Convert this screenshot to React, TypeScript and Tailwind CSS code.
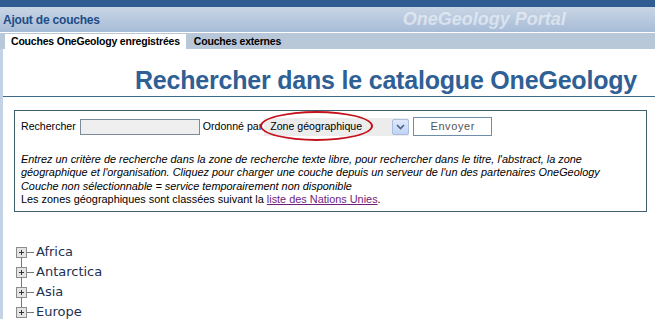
import React from "react";

const regions = ["Africa", "Antarctica", "Asia", "Europe"];

function PlusBox() {
  return (
    <svg width="11" height="11" viewBox="0 0 11 11" className="shrink-0">
      <rect x="0.5" y="0.5" width="10" height="10" fill="#e4e4e4" stroke="#8c8c8c" />
      <path d="M3 5.5h5M5.5 3v5" stroke="#333" strokeWidth="1" />
    </svg>
  );
}

function TreeItem({ label, last }: { label: string; last: boolean }) {
  return (
    <div className="relative flex h-5 items-center">
      {/* vertical connector */}
      {!last && <div className="absolute left-[5px] top-[15px] h-[10px] w-px bg-[#777]" />}
      <PlusBox />
      <div className="h-px w-[7px] bg-[#777]" />
      <span
        className="ml-[2px] text-[13px] text-[#1c3150]"
        style={{ fontFamily: '"DejaVu Sans", Verdana, sans-serif' }}
      >
        {label}
      </span>
    </div>
  );
}

export default function App() {
  return (
    <div
      className="h-[319px] w-[655px] overflow-hidden bg-white"
      style={{ fontFamily: '"Liberation Sans", Arial, sans-serif' }}
    >
      <div className="h-[7px] bg-[#2f5d93]" />
      <div className="flex h-[25px] items-center bg-gradient-to-b from-[#c9d5e4] to-[#a7bcd8] pl-[3px]">
        <span className="text-[12px] font-bold tracking-[-0.2px] text-[#1f4c86]">Ajout de couches</span>
        <span className="ml-[303px] text-[18px] font-bold italic text-white/50">OneGeology Portal</span>
      </div>
      <div className="h-px bg-white" />
      <div className="flex h-[16px] items-end bg-[#b9c8d9] pl-[5px]">
        <div className="flex h-[15px] items-center bg-white px-[6px] text-[10.5px] font-bold tracking-[-0.2px] text-black">
          Couches OneGeology enregistrées
        </div>
        <div className="flex h-[15px] items-center px-[8px] text-[10.5px] font-bold tracking-[-0.2px] text-black">
          Couches externes
        </div>
      </div>
      <div className="flex h-[271px]">
        <div className="w-[3px] bg-[#c3d2e4]" />
        <div className="flex-1">
          <div className="flex h-[48px] items-end justify-end border-b border-[#3b6a8b] pr-[18px]">
            <h1 className="text-[25px] font-bold leading-[32px] tracking-[-0.2px] text-[#2e6096]">
              Rechercher dans le catalogue OneGeology
            </h1>
          </div>
          <div className="mt-[13px] ml-[11px] mr-[8px] h-[102px] border border-[#3f5f6e] px-[6px]">
            <div className="mt-[6px] flex items-center text-[10.6px] text-black">
              <span>Rechercher</span>
              <div className="ml-[4px] h-[16px] w-[120px] border border-[#7a8b9b] bg-[#efefef]" />
              <span className="ml-[3px]">Ordonné par</span>
              <div className="relative ml-[2px] flex h-[18px] w-[145px] items-center bg-[#ececec]">
                <span className="ml-[6px]">Zone géographique</span>
                <div className="absolute right-0 top-[1px] flex h-[16px] w-[17px] items-center justify-center rounded-[2px] border border-[#a9bde0] bg-gradient-to-b from-[#e0e9fb] to-[#c1d3f6]">
                  <svg width="9" height="6" viewBox="0 0 9 6">
                    <path d="M1 1l3.5 3.5L8 1" stroke="#4d6185" strokeWidth="1.6" fill="none" />
                  </svg>
                </div>
                {/* red highlight ellipse */}
                <div className="absolute left-[-4px] top-[-7px] h-[30px] w-[113px] rounded-[50%] border-2 border-[#c4101a]" />
              </div>
              <button className="ml-[4px] h-[19px] w-[79px] border border-[#6f8fa9] bg-white text-[11px] tracking-[0.6px] text-[#555]">
                Envoyer
              </button>
            </div>
            <div className="mt-[17px] text-[10.9px] leading-[13.4px] text-black">
              <p className="italic">
                Entrez un critère de recherche dans la zone de recherche texte libre, pour rechercher dans le titre, l'abstract, la zone
              </p>
              <p className="italic">
                géographique et l'organisation. Cliquez pour charger une couche depuis un serveur de l'un des partenaires OneGeology
              </p>
              <p className="italic">Couche non sélectionnable = service temporairement non disponible</p>
              <p>
                Les zones géographiques sont classées suivant la{" "}
                <a className="text-[#6e1d7c] underline">liste des Nations Unies</a>.
              </p>
            </div>
          </div>
          <div className="ml-[13px] mt-[30px]">
            {regions.map((r, i) => (
              <TreeItem key={r} label={r} last={i === regions.length - 1} />
            ))}
          </div>
        </div>
      </div>
    </div>
  );
}
